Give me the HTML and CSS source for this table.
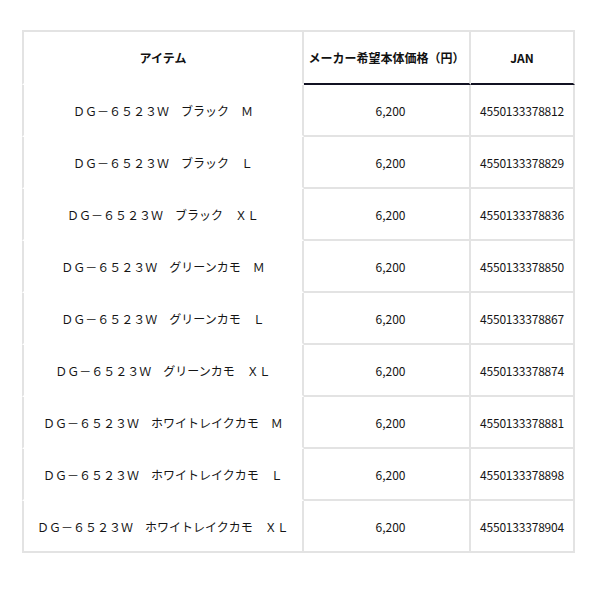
FILE: index.html
```html
<!DOCTYPE html>
<html lang="ja">
<head>
<meta charset="utf-8">
<link rel="stylesheet" href="styles.css">
</head>
<body>
<div class="wrap">
<table class="spec">
<thead>
<tr><th class="c1">アイテム</th><th class="c2">メーカー希望本体価格（円）</th><th class="c3">JAN</th></tr>
</thead>
<tbody>
<tr><td class="c1">ＤＧ－６５２３Ｗ　ブラック　Ｍ</td><td class="c2">6,200</td><td class="c3">4550133378812</td></tr>
<tr><td class="c1">ＤＧ－６５２３Ｗ　ブラック　Ｌ</td><td class="c2">6,200</td><td class="c3">4550133378829</td></tr>
<tr><td class="c1">ＤＧ－６５２３Ｗ　ブラック　ＸＬ</td><td class="c2">6,200</td><td class="c3">4550133378836</td></tr>
<tr><td class="c1">ＤＧ－６５２３Ｗ　グリーンカモ　Ｍ</td><td class="c2">6,200</td><td class="c3">4550133378850</td></tr>
<tr><td class="c1">ＤＧ－６５２３Ｗ　グリーンカモ　Ｌ</td><td class="c2">6,200</td><td class="c3">4550133378867</td></tr>
<tr><td class="c1">ＤＧ－６５２３Ｗ　グリーンカモ　ＸＬ</td><td class="c2">6,200</td><td class="c3">4550133378874</td></tr>
<tr><td class="c1">ＤＧ－６５２３Ｗ　ホワイトレイクカモ　Ｍ</td><td class="c2">6,200</td><td class="c3">4550133378881</td></tr>
<tr><td class="c1">ＤＧ－６５２３Ｗ　ホワイトレイクカモ　Ｌ</td><td class="c2">6,200</td><td class="c3">4550133378898</td></tr>
<tr><td class="c1">ＤＧ－６５２３Ｗ　ホワイトレイクカモ　ＸＬ</td><td class="c2">6,200</td><td class="c3">4550133378904</td></tr>
</tbody>
</table>
</div>
</body>
</html>
```
FILE: styles.css
```css
html, body {
  margin: 0;
  padding: 0;
  background: #fff;
}
.wrap {
  padding: 30px 0 0 22px;
}
.spec {
  border-spacing: 0;
  border-collapse: separate;
  table-layout: fixed;
  width: 553px;
  font-family: "Noto Sans CJK JP", "Noto Sans", sans-serif;
  font-size: 12px;
  color: #151515;
}
.spec th, .spec td {
  padding: 0;
  text-align: center;
  vertical-align: middle;
  border: 0 solid #e3e3e3;
}
.spec th {
  height: 51px;
  font-weight: bold;
  color: #111;
  border-top-width: 2px;
}
.spec td {
  height: 50px;
}
.spec .c1 {
  width: 278px;
  border-left-width: 2px;
  border-right-width: 2px;
  border-bottom-width: 2px;
  border-bottom-color: transparent;
}
.spec tbody tr:last-child .c1 {
  border-bottom-color: #e3e3e3;
}
.spec th.c1 {
  border-bottom-color: transparent;
}
.spec .c2 {
  width: 165px;
  border-right-width: 2px;
  border-bottom-width: 2px;
}
.spec td.c2 {
  padding-left: 8px;
}
.spec .c3 {
  width: 102px;
  border-right-width: 2px;
  border-bottom-width: 2px;
}
.spec th.c2, .spec th.c3 {
  border-bottom-color: #111122;
}
.spec td.c3 {
  letter-spacing: -0.2px;
}
```
